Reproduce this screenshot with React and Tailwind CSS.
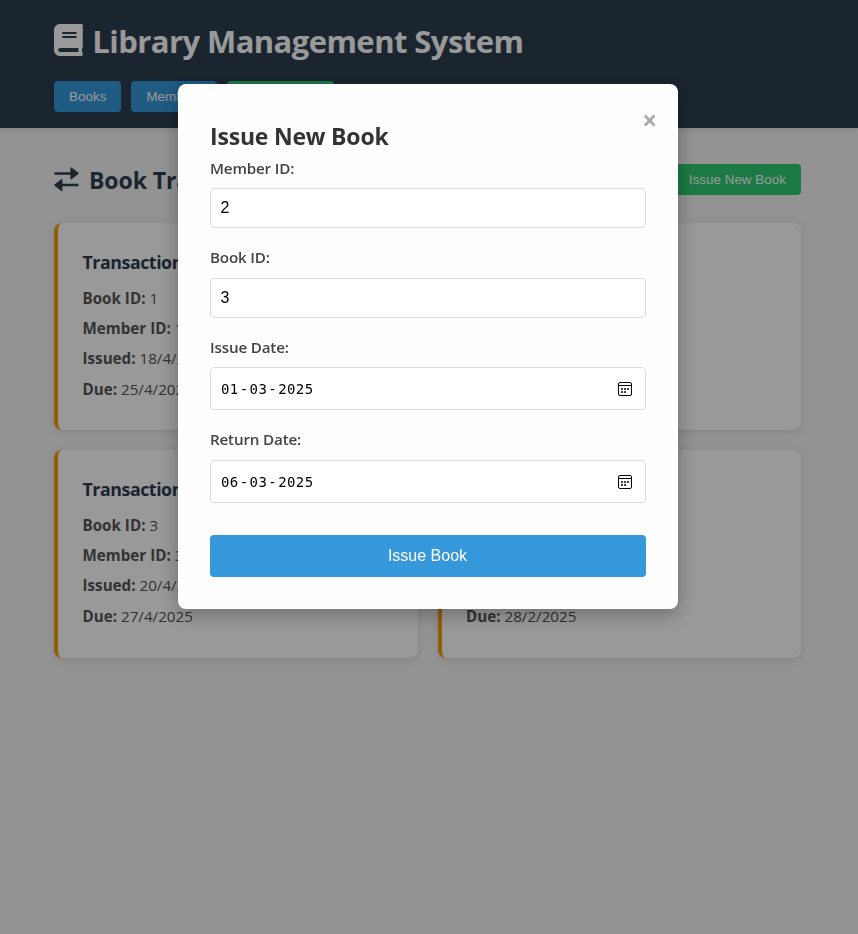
import { FaBook } from 'react-icons/fa';

const transactions = [
  { id: 1, book: 1, member: 1, issued: '18/4/2025', due: '25/4/2025' },
  { id: 2, book: 2, member: 2, issued: '19/4/2025', due: '26/4/2025' },
  { id: 3, book: 3, member: 3, issued: '20/4/2025', due: '27/4/2025' },
  { id: 4, book: 4, member: 4, issued: '21/2/2025', due: '28/2/2025' },
];

function NavButton({ children, className }) {
  return (
    <button
      className={`h-[31px] rounded-[4px] px-[15px] font-['Liberation_Sans',Arial,sans-serif] text-[13.333px] leading-[15px] tracking-[0.07px] text-white ${className}`}
    >
      {children}
    </button>
  );
}

function ExchangeIcon() {
  return (
    <svg className="mt-[3px] mr-[10px] h-[25px] w-[25px]" viewBox="0 0 25 25" fill="currentColor">
      <path d="M1.2 5.2H16.4V1Q16.4 -0.3 17.5 0.5L24.4 5.7Q25 6.4 24.4 7.1L17.5 12.2Q16.4 13 16.4 11.8V7.7H1.2Q0.2 7.7 0.2 6.9V6Q0.2 5.2 1.2 5.2Z" />
      <path d="M23.6 16.8H8.4V12.7Q8.4 11.5 7.3 12.3L0.5 17.4Q-0.1 18.1 0.5 18.8L7.3 24Q8.4 24.8 8.4 23.5V19.3H23.6Q24.6 19.3 24.6 18.5V17.6Q24.6 16.8 23.6 16.8Z" />
    </svg>
  );
}

function Row({ label, value }) {
  return (
    <p className="h-[30.4px] text-[15.2px] leading-[30.4px] text-[#555]">
      <strong className="font-bold">{label}</strong> {value}
    </p>
  );
}

function TransactionCard({ item }) {
  return (
    <article className="h-[207.4px] rounded-[8px] border-l-4 border-[#f39c12] bg-white pt-[25px] pl-[24.5px] shadow-[0_2px_10px_rgba(0,0,0,0.1)]">
      <h3 className="mb-[6.5px] h-[28px] text-[17.8px] leading-[28px] font-bold tracking-[-0.45px] text-[#2c3e50]">
        Transaction #{item.id}
      </h3>
      <Row label="Book ID:" value={item.book} />
      <Row label="Member ID:" value={item.member} />
      <Row label="Issued:" value={item.issued} />
      <Row label="Due:" value={item.due} />
    </article>
  );
}

function CalendarIcon() {
  return (
    <svg width="14" height="14" viewBox="0 0 14 14" fill="none">
      <rect x="0.5" y="0.5" width="13" height="13" rx="1.5" stroke="#000" />
      <path d="M0.5 3.5H13.5" stroke="#000" />
      <path d="M3 6h2v2H3zM6 6h2v2H6zM9 6h2v2H9zM3 9h2v2H3zM6 9h2v2H6z" fill="#444" />
    </svg>
  );
}

function Label({ children }) {
  return (
    <label className="block h-[24px] text-[15.2px] leading-[24px] font-semibold tracking-[-0.17px] text-[#444]">
      {children}
    </label>
  );
}

function TextField({ value }) {
  return (
    <div className="flex h-[40px] items-center rounded-[4px] border border-[#ddd] bg-white px-[9.4px] font-['Liberation_Sans',Arial,sans-serif] text-[16px] leading-[18px] text-black">
      {value}
    </div>
  );
}

function DateField({ parts }) {
  return (
    <div className="flex h-[43px] items-center justify-between rounded-[4px] border border-[#ddd] bg-white pr-[13px] pl-[10px] text-black">
      <div className="flex pt-[2px] font-['DejaVu_Sans_Mono',monospace] text-[14px] tracking-[0.42px]">
        <span>{parts[0]}</span>
        <span className="mx-[1px]">-</span>
        <span>{parts[1]}</span>
        <span className="mx-[1px]">-</span>
        <span>{parts[2]}</span>
      </div>
      <CalendarIcon />
    </div>
  );
}

function IssueModal() {
  return (
    <div className="fixed inset-0 flex items-start justify-center bg-black/40 pt-[84px]">
      <div className="relative ml-[-2px] h-[525px] w-[500px] rounded-[8px] bg-[#fefefe] px-[32px] pt-[36px] shadow-[0_5px_20px_rgba(0,0,0,0.3)]">
        <button className="absolute top-[21px] right-[21px] text-[26px] leading-[30px] font-bold text-[#aaa]">×</button>
        <h2 className="h-[32px] text-[23px] leading-[32px] font-bold tracking-[-0.2px] text-[#333]">Issue New Book</h2>
        <form>
          <div className="mt-[4px]">
            <Label>Member ID:</Label>
            <div className="mt-[8px]"><TextField value="2" /></div>
          </div>
          <div className="mt-[17px]">
            <Label>Book ID:</Label>
            <div className="mt-[9px]"><TextField value="3" /></div>
          </div>
          <div className="mt-[17px]">
            <Label>Issue Date:</Label>
            <div className="mt-[8px]"><DateField parts={['01', '03', '2025']} /></div>
          </div>
          <div className="mt-[17px]">
            <Label>Return Date:</Label>
            <div className="mt-[9px]"><DateField parts={['06', '03', '2025']} /></div>
          </div>
          <button
            type="button"
            className="mt-[32px] block h-[42px] w-full rounded-[4px] bg-[#3498db] pr-[1px] font-['Liberation_Sans',Arial,sans-serif] text-[16px] leading-[18px] text-white"
          >
            Issue Book
          </button>
        </form>
      </div>
    </div>
  );
}

export default function App() {
  return (
    <div className="min-h-screen bg-[#f5f5f5] font-['Open_Sans','Noto_Sans',sans-serif] text-[#333]">
      <header className="h-[128px] bg-[#2c3e50] pt-[20px] pr-[57px] pl-[54px] shadow-[0_2px_5px_rgba(0,0,0,0.1)]">
        <h1 className="flex h-[44px] text-[31px] leading-[43px] font-bold tracking-[-0.56px] text-white">
          <FaBook preserveAspectRatio="none" className="mt-[4px] mr-[9.5px] h-[32px] w-[28.8px]" />
          Library Management System
        </h1>
        <nav className="mt-[17px] flex gap-[10px]">
          <NavButton className="bg-[#3498db]">Books</NavButton>
          <NavButton className="bg-[#3498db]">Members</NavButton>
          <NavButton className="bg-[#2ecc71]">Transactions</NavButton>
        </nav>
      </header>
      <main className="pt-[36px] pr-[57px] pl-[54px]">
        <div className="flex h-[31px] items-start justify-between">
          <h2 className="flex text-[23px] leading-[32px] font-bold tracking-[-0.1px] text-[#2c3e50]">
            <ExchangeIcon />
            Book Transactions
          </h2>
          <NavButton className="bg-[#2ecc71]">Issue New Book</NavButton>
        </div>
        <div className="mt-[28px] grid grid-cols-2 gap-x-[20px] gap-y-[19.8px]">
          {transactions.map((item) => (
            <TransactionCard key={item.id} item={item} />
          ))}
        </div>
      </main>
      <IssueModal />
    </div>
  );
}
